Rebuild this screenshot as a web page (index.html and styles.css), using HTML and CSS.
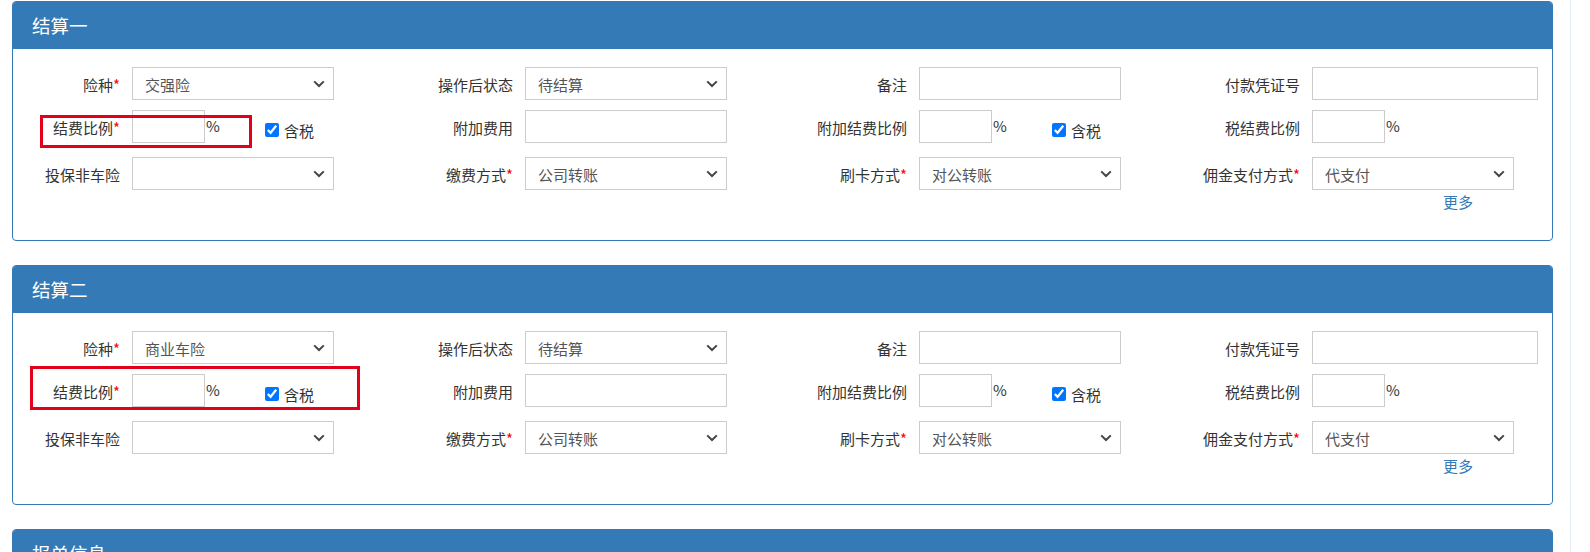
FILE: index.html
```html
<!DOCTYPE html>
<html lang="zh-CN">
<head>
    <meta charset="UTF-8">
    <title>结算</title>
    <link rel="stylesheet" href="styles.css">
</head>
<body>
<div class="page">

    <!-- 结算一 -->
    <div class="panel">
        <div class="panel-heading">结算一</div>
        <div class="panel-body">
            <div class="form-grid">
                <div class="field">
                    <label class="control-label">险种<i>*</i></label>
                    <div class="select"><span>交强险</span><svg class="caret" viewBox="0 0 12 8"><path d="M1.2 1.4 6 6 10.8 1.4"/></svg></div>
                </div>
                <div class="field">
                    <label class="control-label">操作后状态</label>
                    <div class="select"><span>待结算</span><svg class="caret" viewBox="0 0 12 8"><path d="M1.2 1.4 6 6 10.8 1.4"/></svg></div>
                </div>
                <div class="field">
                    <label class="control-label">备注</label>
                    <input class="input" type="text">
                </div>
                <div class="field">
                    <label class="control-label">付款凭证号</label>
                    <input class="input input-wide" type="text">
                </div>

                <div class="field">
                    <label class="control-label">结费比例<i>*</i></label>
                    <div class="rate">
                        <input class="input input-small" type="text"><span class="pct">%</span>
                        <label class="tax"><input type="checkbox" checked>含税</label>
                    </div>
                </div>
                <div class="field">
                    <label class="control-label">附加费用</label>
                    <input class="input" type="text">
                </div>
                <div class="field">
                    <label class="control-label">附加结费比例</label>
                    <div class="rate">
                        <input class="input input-small" type="text"><span class="pct">%</span>
                        <label class="tax"><input type="checkbox" checked>含税</label>
                    </div>
                </div>
                <div class="field">
                    <label class="control-label">税结费比例</label>
                    <div class="rate">
                        <input class="input input-small" type="text"><span class="pct">%</span>
                    </div>
                </div>

                <div class="field">
                    <label class="control-label">投保非车险</label>
                    <div class="select"><span></span><svg class="caret" viewBox="0 0 12 8"><path d="M1.2 1.4 6 6 10.8 1.4"/></svg></div>
                </div>
                <div class="field">
                    <label class="control-label">缴费方式<i>*</i></label>
                    <div class="select"><span>公司转账</span><svg class="caret" viewBox="0 0 12 8"><path d="M1.2 1.4 6 6 10.8 1.4"/></svg></div>
                </div>
                <div class="field">
                    <label class="control-label">刷卡方式<i>*</i></label>
                    <div class="select"><span>对公转账</span><svg class="caret" viewBox="0 0 12 8"><path d="M1.2 1.4 6 6 10.8 1.4"/></svg></div>
                </div>
                <div class="field">
                    <label class="control-label">佣金支付方式<i>*</i></label>
                    <div class="select"><span>代支付</span><svg class="caret" viewBox="0 0 12 8"><path d="M1.2 1.4 6 6 10.8 1.4"/></svg></div>
                </div>

                <div class="more-cell"><a class="more" href="#">更多</a></div>
            </div>
        </div>
        <div class="mark mark-one"></div>
    </div>

    <!-- 结算二 -->
    <div class="panel">
        <div class="panel-heading">结算二</div>
        <div class="panel-body">
            <div class="form-grid">
                <div class="field">
                    <label class="control-label">险种<i>*</i></label>
                    <div class="select"><span>商业车险</span><svg class="caret" viewBox="0 0 12 8"><path d="M1.2 1.4 6 6 10.8 1.4"/></svg></div>
                </div>
                <div class="field">
                    <label class="control-label">操作后状态</label>
                    <div class="select"><span>待结算</span><svg class="caret" viewBox="0 0 12 8"><path d="M1.2 1.4 6 6 10.8 1.4"/></svg></div>
                </div>
                <div class="field">
                    <label class="control-label">备注</label>
                    <input class="input" type="text">
                </div>
                <div class="field">
                    <label class="control-label">付款凭证号</label>
                    <input class="input input-wide" type="text">
                </div>

                <div class="field">
                    <label class="control-label">结费比例<i>*</i></label>
                    <div class="rate">
                        <input class="input input-small" type="text"><span class="pct">%</span>
                        <label class="tax"><input type="checkbox" checked>含税</label>
                    </div>
                </div>
                <div class="field">
                    <label class="control-label">附加费用</label>
                    <input class="input" type="text">
                </div>
                <div class="field">
                    <label class="control-label">附加结费比例</label>
                    <div class="rate">
                        <input class="input input-small" type="text"><span class="pct">%</span>
                        <label class="tax"><input type="checkbox" checked>含税</label>
                    </div>
                </div>
                <div class="field">
                    <label class="control-label">税结费比例</label>
                    <div class="rate">
                        <input class="input input-small" type="text"><span class="pct">%</span>
                    </div>
                </div>

                <div class="field">
                    <label class="control-label">投保非车险</label>
                    <div class="select"><span></span><svg class="caret" viewBox="0 0 12 8"><path d="M1.2 1.4 6 6 10.8 1.4"/></svg></div>
                </div>
                <div class="field">
                    <label class="control-label">缴费方式<i>*</i></label>
                    <div class="select"><span>公司转账</span><svg class="caret" viewBox="0 0 12 8"><path d="M1.2 1.4 6 6 10.8 1.4"/></svg></div>
                </div>
                <div class="field">
                    <label class="control-label">刷卡方式<i>*</i></label>
                    <div class="select"><span>对公转账</span><svg class="caret" viewBox="0 0 12 8"><path d="M1.2 1.4 6 6 10.8 1.4"/></svg></div>
                </div>
                <div class="field">
                    <label class="control-label">佣金支付方式<i>*</i></label>
                    <div class="select"><span>代支付</span><svg class="caret" viewBox="0 0 12 8"><path d="M1.2 1.4 6 6 10.8 1.4"/></svg></div>
                </div>

                <div class="more-cell"><a class="more" href="#">更多</a></div>
            </div>
        </div>
        <div class="mark mark-two"></div>
    </div>

    <!-- 报单信息 -->
    <div class="panel">
        <div class="panel-heading">报单信息</div>
        <div class="panel-body"></div>
    </div>

</div>
</body>
</html>
```

FILE: styles.css
```css
html, body {
    margin: 0;
    padding: 0;
    background-color: #fff;
    overflow: hidden;
}
body {
    font-family: "Noto Sans CJK SC", "Noto Sans", sans-serif;
    font-size: 15px;
    color: #333;
}
.page {
    width: 1558px;
    min-height: 552px;
    padding: 1px 0 0 12px;
    border-right: 1px solid #e6edf7;
}
.panel {
    position: relative;
    width: 1541px;
    box-sizing: border-box;
    margin-bottom: 24px;
    border: 1px solid #337ab7;
    border-radius: 4px;
    background-color: #fff;
}
.panel-heading {
    height: 47px;
    padding-left: 19px;
    line-height: 46px;
    font-size: 18.5px;
    color: #fff;
    background-color: #337ab7;
    border-radius: 3px 3px 0 0;
}
.panel-body {
    padding: 18px 0 19px 0;
}
.form-grid {
    display: grid;
    grid-template-columns: 393px 394px 393px 1fr;
    grid-template-rows: 33px 37px 34px 20px;
    row-gap: 10px;
}
.field {
    display: flex;
    align-items: flex-start;
    gap: 12px;
}
.control-label {
    width: 107px;
    flex: none;
    text-align: right;
    padding-top: 8px;
    line-height: 20px;
    white-space: nowrap;
}
.control-label i {
    font-style: normal;
    color: #f00;
}
.input {
    width: 202px;
    height: 33px;
    box-sizing: border-box;
    border: 1px solid #ccc;
    padding: 0 12px;
    font: inherit;
    color: #555;
    outline: none;
}
.input-wide {
    width: 226px;
}
.input-small {
    width: 73px;
}
.select {
    width: 202px;
    height: 33px;
    box-sizing: border-box;
    border: 1px solid #ccc;
    display: flex;
    align-items: center;
    padding: 1px 8px 0 12px;
    color: #555;
}
.select span {
    flex: 1;
}
.caret {
    width: 12px;
    height: 8px;
    fill: none;
    stroke: #444;
    stroke-width: 2;
}
.rate {
    display: flex;
    align-items: center;
    height: 33px;
}
.pct {
    width: 59px;
    padding-left: 1px;
    margin-top: -2px;
    color: #333;
}
.tax {
    display: flex;
    align-items: center;
    margin-top: 7px;
    white-space: nowrap;
}
.tax input {
    width: 14px;
    height: 14px;
    margin: 0 5px 0 0;
}
.more-cell {
    grid-column: 4;
    margin-top: -9px;
    padding-left: 250px;
    line-height: 20px;
}
.more {
    color: #337ab7;
    text-decoration: none;
}
.mark {
    position: absolute;
    border: 3px solid #e3001b;
    box-sizing: border-box;
}
.mark-one {
    left: 27px;
    top: 113px;
    width: 212px;
    height: 33px;
}
.mark-two {
    left: 17px;
    top: 100px;
    width: 330px;
    height: 44px;
}
```
